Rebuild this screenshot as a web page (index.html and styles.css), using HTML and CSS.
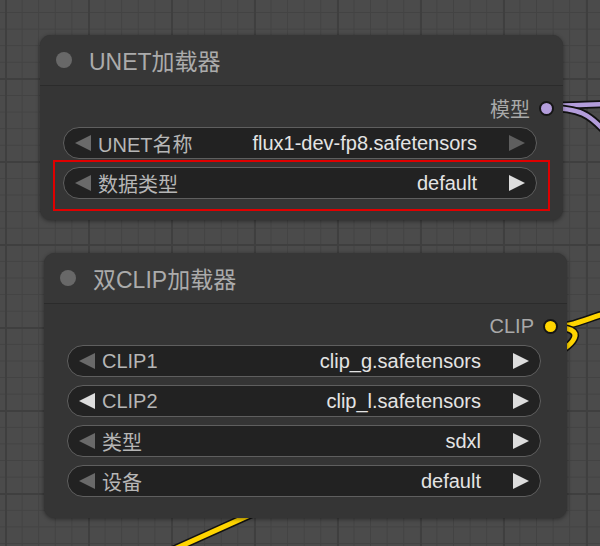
FILE: index.html
```html
<!DOCTYPE html>
<html lang="zh">
<head>
<meta charset="utf-8">
<title>ComfyUI nodes</title>
<link rel="stylesheet" href="styles.css">
</head>
<body>
<div class="canvas">
  <svg class="wires" width="600" height="546" viewBox="0 0 600 546">
    <g fill="none" stroke-linecap="round">
      <path class="w-out" d="M546 106 C 575 106, 590 104, 640 103"/>
      <path class="w-model" d="M546 106 C 575 106, 590 104, 640 103"/>
      <path class="w-out" d="M546 108 C 578 108, 590 112, 612 140"/>
      <path class="w-model" d="M546 108 C 578 108, 590 112, 612 140"/>
      <path class="w-out" d="M551 327 C 575 327, 585 318, 630 306"/>
      <path class="w-clip" d="M551 327 C 575 327, 585 318, 630 306"/>
      <path class="w-out" d="M551 327 C 590 327, 578 345, 540 362"/>
      <path class="w-clip" d="M551 327 C 590 327, 578 345, 540 362"/>
      <path class="w-out" d="M150 560 L 290 497"/>
      <path class="w-clip" d="M150 560 L 290 497"/>
    </g>
  </svg>

  <div class="node node-unet">
    <div class="node-header">
      <span class="node-dot"></span>
      <span class="node-title">UNET加载器</span>
    </div>
    <div class="node-body">
      <div class="output">
        <span class="output-label">模型</span>
        <span class="slot slot-model"></span>
      </div>
      <div class="widget">
        <span class="arrow arrow-left dim"></span>
        <span class="w-label">UNET名称</span>
        <span class="w-value">flux1-dev-fp8.safetensors</span>
        <span class="arrow arrow-right dim"></span>
      </div>
      <div class="widget">
        <span class="arrow arrow-left dim"></span>
        <span class="w-label">数据类型</span>
        <span class="w-value">default</span>
        <span class="arrow arrow-right"></span>
      </div>
    </div>
  </div>

  <div class="highlight"></div>

  <div class="node node-clip">
    <div class="node-header">
      <span class="node-dot"></span>
      <span class="node-title">双CLIP加载器</span>
    </div>
    <div class="node-body">
      <div class="output">
        <span class="output-label">CLIP</span>
        <span class="slot slot-clip"></span>
      </div>
      <div class="widget">
        <span class="arrow arrow-left dim"></span>
        <span class="w-label">CLIP1</span>
        <span class="w-value">clip_g.safetensors</span>
        <span class="arrow arrow-right"></span>
      </div>
      <div class="widget">
        <span class="arrow arrow-left"></span>
        <span class="w-label">CLIP2</span>
        <span class="w-value">clip_l.safetensors</span>
        <span class="arrow arrow-right"></span>
      </div>
      <div class="widget">
        <span class="arrow arrow-left dim"></span>
        <span class="w-label">类型</span>
        <span class="w-value">sdxl</span>
        <span class="arrow arrow-right"></span>
      </div>
      <div class="widget">
        <span class="arrow arrow-left dim"></span>
        <span class="w-label">设备</span>
        <span class="w-value">default</span>
        <span class="arrow arrow-right"></span>
      </div>
    </div>
  </div>
</div>
</body>
</html>
```

FILE: styles.css
```css
* { box-sizing: border-box; }

html, body {
  margin: 0;
  padding: 0;
  background: #4a4a4a;
}

.canvas {
  position: relative;
  width: 600px;
  height: 546px;
  overflow: hidden;
  font-family: "Liberation Sans", "Noto Sans CJK SC", sans-serif;
  background-color: #4b4b4b;
  background-image:
    linear-gradient(to right, #3f3f3f 0, #3f3f3f 2px, transparent 2px),
    linear-gradient(to bottom, #3f3f3f 0, #3f3f3f 2px, transparent 2px),
    linear-gradient(to right, #434343 0, #434343 1px, transparent 1px),
    linear-gradient(to bottom, #434343 0, #434343 1px, transparent 1px);
  background-size: 83px 83px, 83px 83px, 16.6px 16.6px, 16.6px 16.6px;
  background-position: 5px 78px, 5px 78px, 5px 12px, 5px 12px;
}

.wires {
  position: absolute;
  left: 0;
  top: 0;
}

.w-out { stroke: #111; stroke-width: 8; }
.w-model { stroke: #b39ddb; stroke-width: 4.5; }
.w-clip { stroke: #ffd500; stroke-width: 5; }

.node {
  position: absolute;
  background: #353535;
  border-radius: 11px;
  box-shadow: 0 1px 4px rgba(0, 0, 0, 0.45);
}

.node-unet { left: 40px; top: 35px; width: 523px; }
.node-clip { left: 44px; top: 253px; width: 523px; }

.node-header {
  height: 51px;
  display: flex;
  align-items: center;
  padding-left: 16px;
  padding-bottom: 1px;
  background: #373737;
  border-bottom: 1px solid #2b2b2b;
  border-radius: 11px 11px 0 0;
}

.node-dot {
  width: 16px;
  height: 16px;
  border-radius: 50%;
  background: #686868;
  flex: none;
}

.node-title {
  margin-left: 17px;
  font-size: 23px;
  color: #ababab;
  white-space: nowrap;
}

.node-body {
  padding: 11px 0 21px 0;
  display: flex;
  flex-direction: column;
  gap: 8px;
}

.output {
  height: 22px;
  display: flex;
  align-items: center;
  justify-content: flex-end;
  padding-right: 9px;
  gap: 9px;
}

.output-label {
  font-size: 20px;
  color: #a9a9a9;
}

.slot {
  width: 15px;
  height: 15px;
  border-radius: 50%;
  border: 2px solid #151515;
  flex: none;
}

.slot-model { background: #b39ddb; }
.slot-clip { background: #ffd500; }

.widget {
  height: 32px;
  margin: 0 26px 0 23px;
  display: flex;
  align-items: center;
  padding: 0 11px 0 11px;
  background: #222222;
  border: 1px solid #5f5f5f;
  border-radius: 16px;
  font-size: 20px;
}

.arrow {
  width: 0;
  height: 0;
  border-top: 8px solid transparent;
  border-bottom: 8px solid transparent;
  flex: none;
}

.arrow-left { border-right: 16px solid #dddddd; }
.arrow-right { border-left: 16px solid #dddddd; }
.arrow-left.dim { border-right-color: #6a6a6a; }
.arrow-right.dim { border-left-color: #5e5e5e; }

.w-label {
  margin-left: 7px;
  color: #b6b6b6;
  white-space: nowrap;
}

.w-value {
  margin-left: auto;
  margin-right: 32px;
  color: #e4e4e4;
  white-space: nowrap;
}

.highlight {
  position: absolute;
  left: 53px;
  top: 160px;
  width: 497px;
  height: 51px;
  border: 2px solid #e00000;
}
```
